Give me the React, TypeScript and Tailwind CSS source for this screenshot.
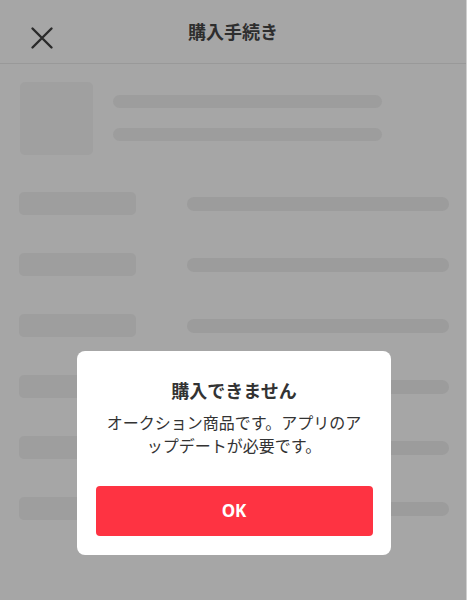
import React from "react";

const rows = [0, 1, 2, 3, 4, 5];

export default function App() {
  const font = { fontFamily: '"Noto Sans CJK JP", "Noto Sans", sans-serif' };
  return (
    <div className="relative w-[467px] h-[600px] overflow-hidden bg-[#a6a6a6] border-r border-[#cfcfcf]" style={font}>
      <div className="h-[64px] flex items-center border-b border-[#999999] relative">
        <div className="absolute left-[28px] top-[24px] w-[28px] h-[28px]">
          <svg viewBox="0 0 28 28" width="28" height="28">
            <path d="M4.5 4.5 L23.5 23.5 M23.5 4.5 L4.5 23.5" stroke="#2a2a2a" strokeWidth="2.4" strokeLinecap="round" />
          </svg>
        </div>
        <div className="flex-1 text-center text-[18px] font-bold text-[#2e2e2e]">購入手続き</div>
      </div>
      <div className="flex gap-[20px] pl-[20px] pt-[18px]">
        <div className="w-[73px] h-[73px] rounded-[5px] bg-[#a0a0a0]" />
        <div className="flex flex-col gap-[20px] pt-[13px]">
          <div className="w-[269px] h-[13px] rounded-full bg-[#9d9d9d]" />
          <div className="w-[269px] h-[13px] rounded-full bg-[#9d9d9d]" />
        </div>
      </div>
      <div className="flex flex-col gap-[38px] pt-[37px] pl-[19px]">
        {rows.map((r) => (
          <div key={r} className="flex items-center h-[23px]">
            <div className="w-[117px] h-[23px] rounded-[5px] bg-[#9e9e9e]" />
            <div className="ml-[51px] w-[262px] h-[14px] rounded-full bg-[#9c9c9c]" />
          </div>
        ))}
      </div>
      <div className="absolute left-[77px] top-[351px] w-[314px] h-[204px] bg-white rounded-[8px] flex flex-col items-center">
        <div className="mt-[26px] text-[18px] font-bold text-[#333333] leading-[26px]">購入できません</div>
        <div className="mt-[8px] text-[16px] text-[#333333] leading-[23px] text-center w-[264px]">
          オークション商品です。アプリのアップデートが必要です。
        </div>
        <button className="mt-[29px] w-[277px] h-[50px] rounded-[4px] bg-[#fe3342] text-white font-bold text-[17px]" style={{ fontFamily: '"Noto Sans", sans-serif' }}>
          OK
        </button>
      </div>
    </div>
  );
}
